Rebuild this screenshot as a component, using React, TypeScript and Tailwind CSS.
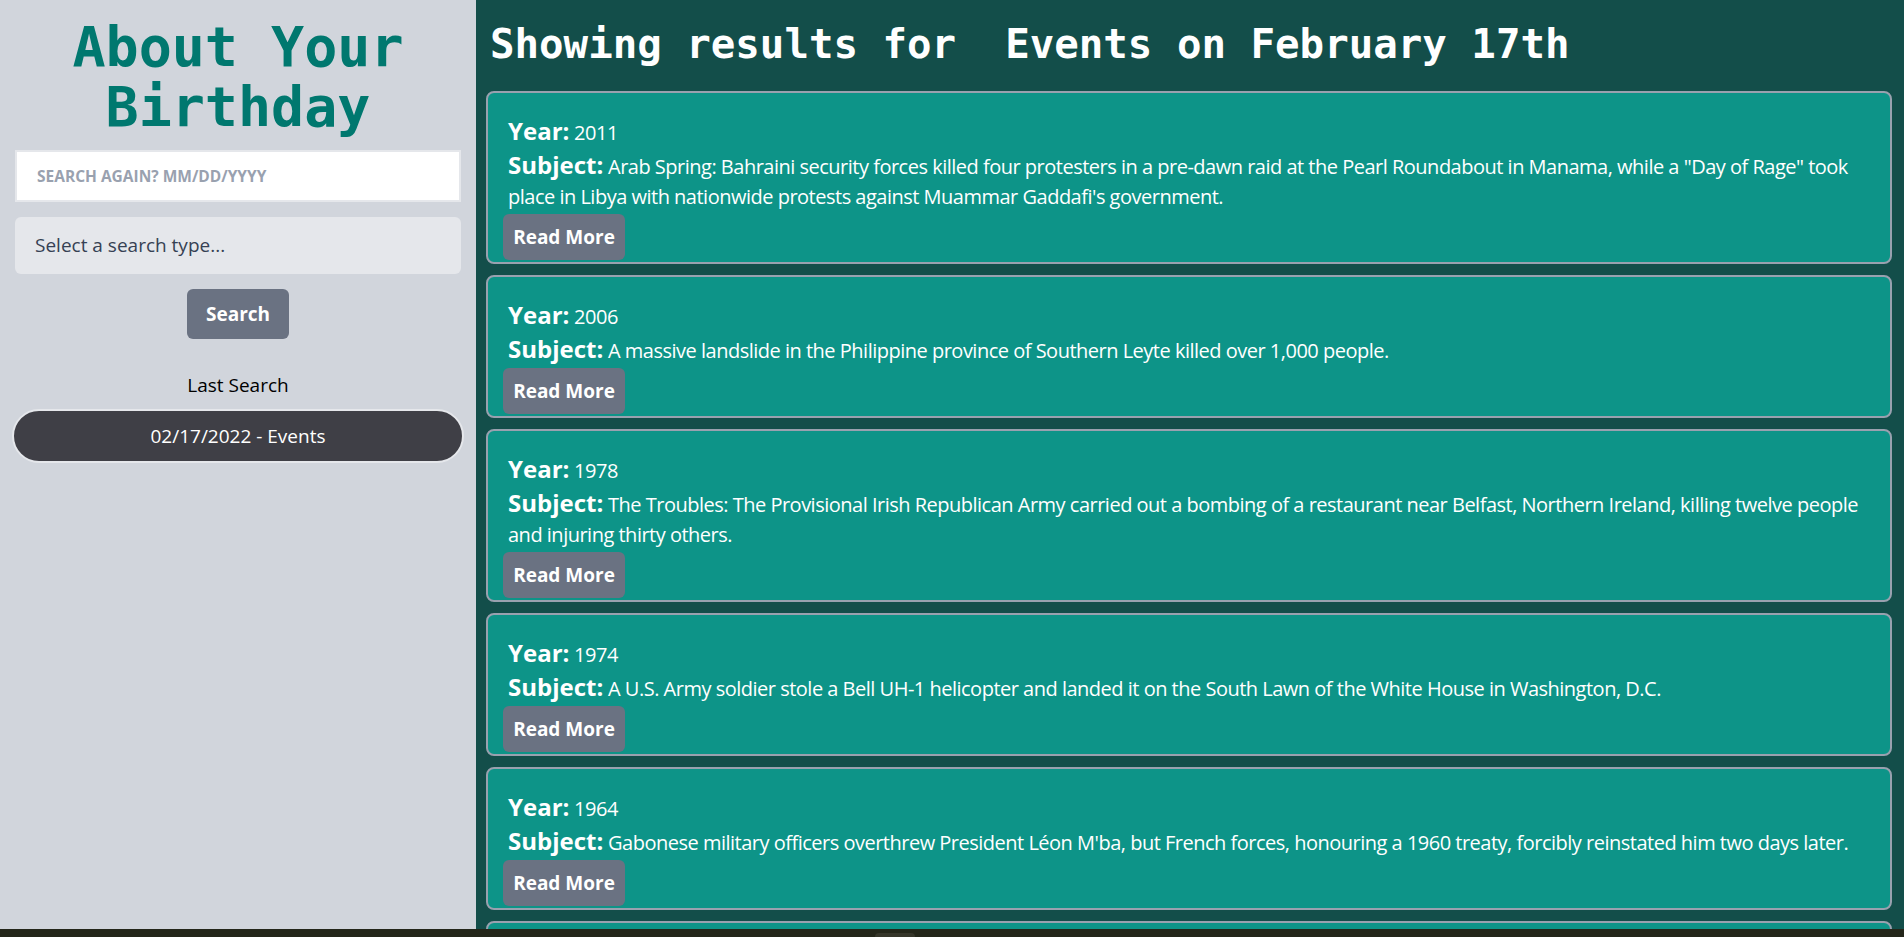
const events = [
  {
    year: 2011,
    text: 'Arab Spring: Bahraini security forces killed four protesters in a pre-dawn raid at the Pearl Roundabout in Manama, while a "Day of Rage" took place in Libya with nationwide protests against Muammar Gaddafi\'s government.',
  },
  {
    year: 2006,
    text: 'A massive landslide in the Philippine province of Southern Leyte killed over 1,000 people.',
  },
  {
    year: 1978,
    text: 'The Troubles: The Provisional Irish Republican Army carried out a bombing of a restaurant near Belfast, Northern Ireland, killing twelve people and injuring thirty others.',
  },
  {
    year: 1974,
    text: 'A U.S. Army soldier stole a Bell UH-1 helicopter and landed it on the South Lawn of the White House in Washington, D.C.',
  },
  {
    year: 1964,
    text: "Gabonese military officers overthrew President Léon M'ba, but French forces, honouring a 1960 treaty, forcibly reinstated him two days later.",
  },
  {
    year: 1959,
    text: 'Vanguard 2, the first weather satellite, is launched to measure cloud-cover distribution.',
  },
];

const EventCard = ({ year, text }: { year: number; text: string }) => {
  return (
    <div className="mb-[11px] ml-[10px] mr-[12px] rounded-lg border-2 border-gray-400 bg-[#0d9488] px-[15px] pb-[2px] pt-[23px] text-white">
      <p className="pl-[5px] text-xl/[30px] tracking-[-0.5px]">
        <span className="text-2xl/[30px] font-bold tracking-normal">Year:</span> {year}
      </p>
      <p className="mt-[2px] pl-[5px] text-xl/[30px] tracking-[-0.5px]">
        <span className="text-2xl/[30px] font-bold tracking-normal">Subject:</span> {text}
      </p>
      <button className="mt-[2px] h-[46px] w-[122px] rounded-md bg-gray-500 text-[19px] font-bold">
        Read More
      </button>
    </div>
  );
};

const Sidebar = () => {
  return (
    <aside className="flex w-[476px] shrink-0 flex-col items-center bg-gray-300 pt-[17px]">
      <h1 className="text-center font-['DejaVu_Sans_Mono',monospace] text-[55px]/[60px] font-bold text-teal-700">
        About Your
        <br />
        Birthday
      </h1>
      <input
        className="mt-[13px] h-[52px] w-[446px] border-2 border-gray-200 bg-white px-5 text-[15.5px] font-bold uppercase placeholder:text-gray-400"
        placeholder="Search again? MM/DD/YYYY"
      />
      <div className="mt-[15px] flex h-[57px] w-[446px] items-center rounded-md bg-gray-200 px-5 text-[19px] text-gray-700">
        Select a search type...
      </div>
      <button className="mt-[15px] h-[50px] w-[102px] rounded-md bg-gray-500 text-[19px] font-bold text-white">
        Search
      </button>
      <p className="mt-8 text-[19px]/7 text-black">Last Search</p>
      <div className="mt-2.5 flex h-[54px] w-[452px] items-center justify-center rounded-full border-2 border-gray-200 bg-[#3f3f46] text-[19px] text-white">
        02/17/2022 - Events
      </div>
    </aside>
  );
};

const App = () => {
  return (
    <div className="flex h-screen flex-col overflow-hidden font-['Open_Sans',sans-serif]">
      <div className="flex min-h-0 flex-1">
        <Sidebar />
        <main className="min-w-0 flex-1 overflow-hidden bg-[#134e4a] pt-[14px]">
          <h2 className="mb-[17px] pl-[14px] font-['DejaVu_Sans_Mono',monospace] text-[40.75px]/[60px] font-bold whitespace-pre text-white">
            Showing results for  Events on February 17th
          </h2>
          {events.map((event) => (
            <EventCard key={event.year} year={event.year} text={event.text} />
          ))}
        </main>
      </div>
      <div className="flex h-2 shrink-0 items-end bg-[#24261a] pl-[875px]">
        <div className="h-1 w-10 rounded-t bg-[#36362a]" />
      </div>
    </div>
  );
};

export default App;
